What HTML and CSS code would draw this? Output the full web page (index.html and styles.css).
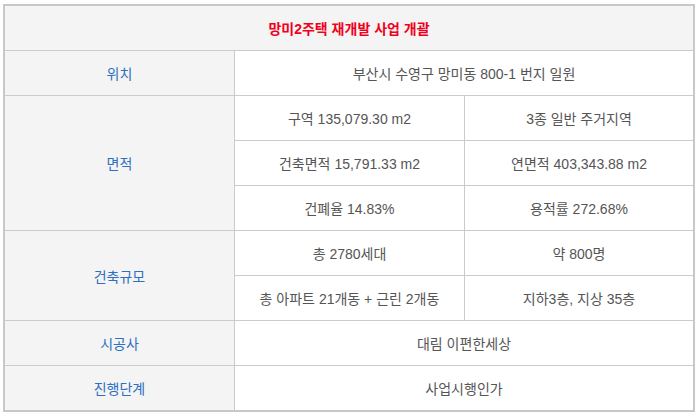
FILE: index.html
```html
<!DOCTYPE html>
<html lang="ko">
<head>
<meta charset="utf-8">
<title>망미2주택 재개발 사업 개괄</title>
<link rel="stylesheet" href="styles.css">
</head>
<body>
<div class="overview">
  <div class="cell title">망미2주택 재개발 사업 개괄</div>

  <div class="cell label">위치</div>
  <div class="cell value wide">부산시 수영구 망미동 800-1 번지 일원</div>

  <div class="cell label span3">면적</div>
  <div class="cell value">구역 135,079.30 m2</div>
  <div class="cell value">3종 일반 주거지역</div>
  <div class="cell value">건축면적 15,791.33 m2</div>
  <div class="cell value">연면적 403,343.88 m2</div>
  <div class="cell value">건폐율 14.83%</div>
  <div class="cell value">용적률 272.68%</div>

  <div class="cell label span2">건축규모</div>
  <div class="cell value">총 2780세대</div>
  <div class="cell value">약 800명</div>
  <div class="cell value">총 아파트 21개동 + 근린 2개동</div>
  <div class="cell value">지하3층, 지상 35층</div>

  <div class="cell label">시공사</div>
  <div class="cell value wide">대림 이편한세상</div>

  <div class="cell label">진행단계</div>
  <div class="cell value wide">사업시행인가</div>
</div>
</body>
</html>
```

FILE: styles.css
```css
html, body {
  margin: 0;
  padding: 0;
  background: #ffffff;
}

body {
  padding: 4px 0 0 3px;
  font-family: "Liberation Sans", "Noto Sans CJK KR", sans-serif;
  font-size: 14px;
}

.overview {
  width: 688px;
  border: 2px solid #c8c8c8;
  background: #cbcbcb;
  display: grid;
  grid-template-columns: 229px 229px 228px;
  grid-auto-rows: 44px;
  gap: 1px;
}

.cell {
  display: flex;
  align-items: center;
  justify-content: center;
  background: #ffffff;
  color: #555555;
  white-space: nowrap;
}

.title {
  grid-column: 1 / 4;
  background: #f4f4f4;
  color: #f0001c;
  font-weight: bold;
}

.label {
  background: #f4f4f4;
  color: #2d6fc1;
}

.span3 {
  grid-row: span 3;
}

.span2 {
  grid-row: span 2;
}

.wide {
  grid-column: 2 / 4;
}
```
